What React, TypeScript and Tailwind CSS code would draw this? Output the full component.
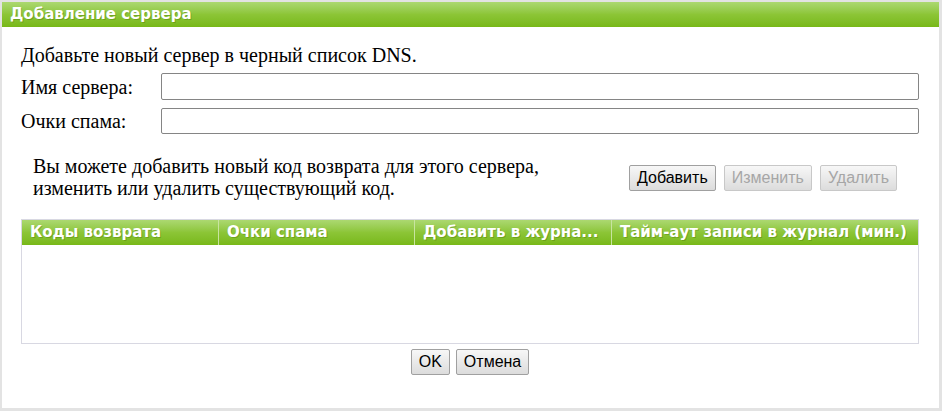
import React from "react";

const columns = [
  { title: "Коды возврата", w: "w-[196px]" },
  { title: "Очки спама", w: "w-[196px]" },
  { title: "Добавить в журна...", w: "w-[197px]" },
  { title: "Тайм-аут записи в журнал (мин.)", w: "flex-1" },
];

function Btn({ label, disabled }: { label: string; disabled?: boolean }) {
  return (
    <button
      className={`h-[26px] rounded-[2px] border bg-gradient-to-b from-[#f7f7f7] to-[#dcdcdc] px-[7px] font-['Liberation_Sans',Arial,sans-serif] text-[16px] leading-none ${
        disabled ? "border-[#c8c8c8] text-[#a6a6a6]" : "border-[#a0a0a0] text-black"
      }`}
    >
      {label}
    </button>
  );
}

export default function App() {
  return (
    <div className="h-[411px] w-[942px] bg-white">
      <div className="flex h-[411px] w-[942px] flex-col border-l-2 border-r-[3px] border-b-[3px] border-t-2 border-[#e3e3e3]">
        <div className="flex h-[25px] shrink-0 items-center bg-gradient-to-b from-[#acd870] via-[#8cc536] to-[#78b817] px-[8px] font-['DejaVu_Sans',Verdana,sans-serif] text-[15px] font-bold text-white [text-shadow:1px_1px_0_rgba(60,90,0,0.3)]">
          Добавление сервера
        </div>

        <div className="flex flex-col pl-[19px] pr-[20px] pt-[16px] font-['Liberation_Serif','Times_New_Roman',serif] text-[20px] text-black">
          <p className="leading-[24px]">Добавьте новый сервер в черный список DNS.</p>

          <div className="mt-[6px] flex items-center">
            <label className="w-[140px] leading-[24px]">Имя сервера:</label>
            <input className="h-[27px] flex-1 rounded-[2px] border border-[#858585] bg-white" />
          </div>
          <div className="mt-[8px] flex items-center">
            <label className="w-[140px] leading-[24px]">Очки спама:</label>
            <input className="h-[26px] flex-1 rounded-[2px] border border-[#858585] bg-white" />
          </div>

          <div className="mt-[21px] flex items-start">
            <p className="ml-[12px] w-[560px] leading-[22px]">
              Вы можете добавить новый код возврата для этого сервера,
              <br />
              изменить или удалить существующий код.
            </p>
            <div className="ml-[36px] mt-[10px] flex gap-[8px]">
              <Btn label="Добавить" />
              <Btn label="Изменить" disabled />
              <Btn label="Удалить" disabled />
            </div>
          </div>

          <div className="mt-[20px] flex h-[125px] flex-col border border-[#d8d8e2]">
            <div className="flex h-[25px] bg-gradient-to-b from-[#acd870] via-[#8cc536] to-[#78b817] font-['DejaVu_Sans',Verdana,sans-serif]">
              {columns.map((c, i) => (
                <div
                  key={c.title}
                  className={`${c.w} flex items-center overflow-hidden whitespace-nowrap px-[8px] text-[15px] font-bold text-white [text-shadow:1px_1px_0_rgba(60,90,0,0.3)] ${
                    i > 0 ? "border-l border-[#c8e4a0]" : ""
                  }`}
                >
                  {c.title}
                </div>
              ))}
            </div>
          </div>

          <div className="mt-[5px] flex justify-center gap-[6px]">
            <Btn label="OK" />
            <Btn label="Отмена" />
          </div>
        </div>
      </div>
    </div>
  );
}
